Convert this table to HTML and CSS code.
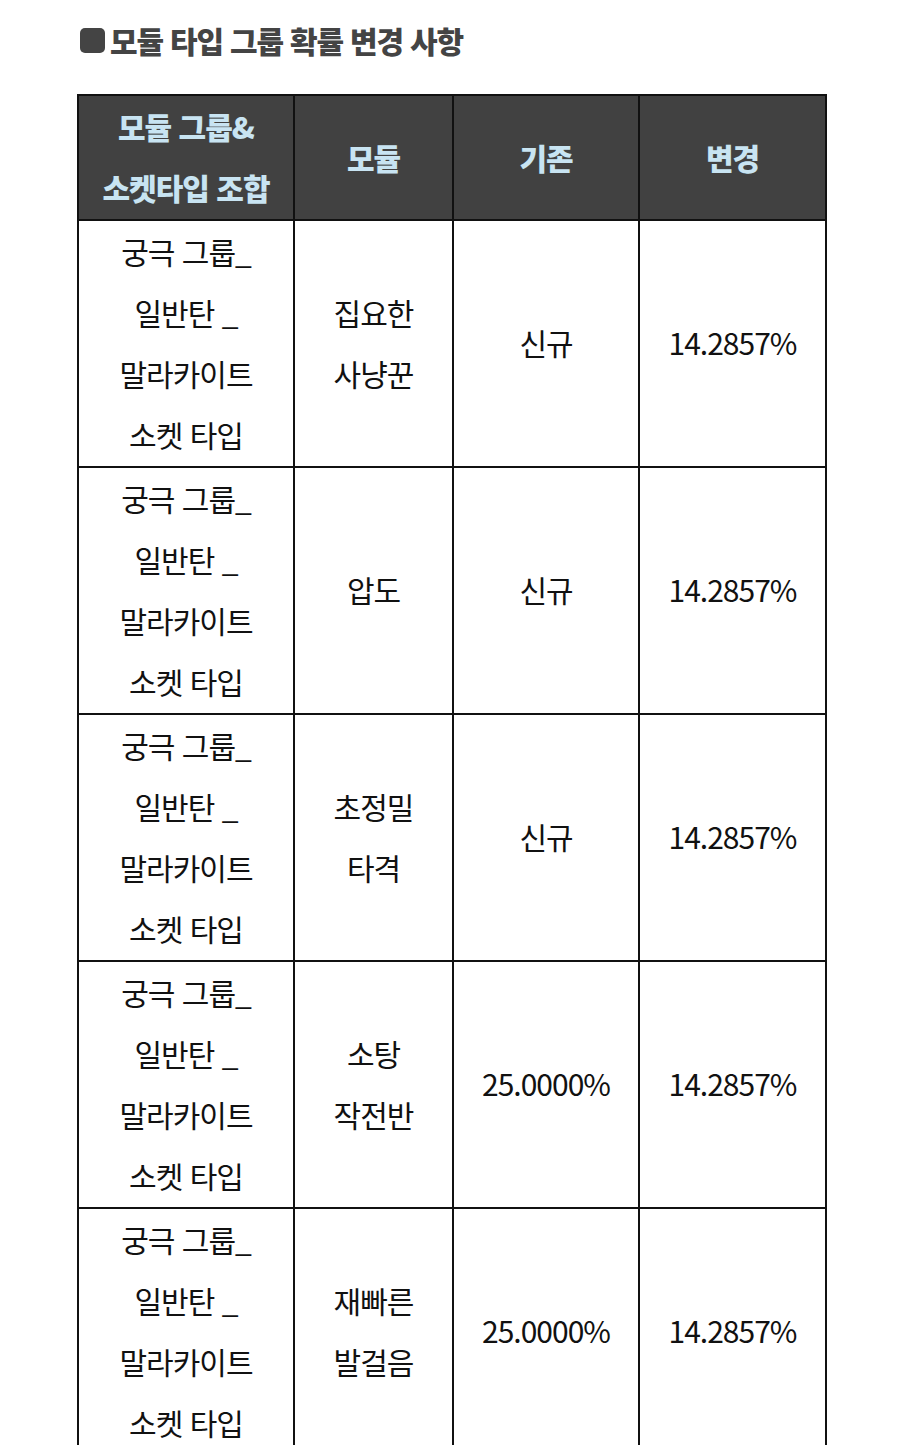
FILE: index.html
```html
<!DOCTYPE html>
<html lang="ko">
<head>
<meta charset="utf-8">
<link rel="stylesheet" href="styles.css">
</head>
<body>
<div class="page">
  <h2 class="title"><span class="bullet"></span>모듈 타입 그룹 확률 변경 사항</h2>
  <table class="prob">
    <colgroup>
      <col class="c1"><col class="c2"><col class="c3"><col class="c4">
    </colgroup>
    <thead>
      <tr><th>모듈 그룹&amp;<br>소켓타입 조합</th><th>모듈</th><th>기존</th><th>변경</th></tr>
    </thead>
    <tbody>
      <tr><td>궁극 그룹_<br>일반탄 _<br>말라카이트<br>소켓 타입</td><td>집요한<br>사냥꾼</td><td>신규</td><td>14.2857%</td></tr>
      <tr><td>궁극 그룹_<br>일반탄 _<br>말라카이트<br>소켓 타입</td><td>압도</td><td>신규</td><td>14.2857%</td></tr>
      <tr><td>궁극 그룹_<br>일반탄 _<br>말라카이트<br>소켓 타입</td><td>초정밀<br>타격</td><td>신규</td><td>14.2857%</td></tr>
      <tr><td>궁극 그룹_<br>일반탄 _<br>말라카이트<br>소켓 타입</td><td>소탕<br>작전반</td><td>25.0000%</td><td>14.2857%</td></tr>
      <tr><td>궁극 그룹_<br>일반탄 _<br>말라카이트<br>소켓 타입</td><td>재빠른<br>발걸음</td><td>25.0000%</td><td>14.2857%</td></tr>
    </tbody>
  </table>
</div>
</body>
</html>
```
FILE: styles.css
```css
html, body {
  margin: 0;
  background: #fff;
}
.page {
  padding: 18px 0 0 77px;
  font-family: "Noto Sans CJK KR", "Noto Sans", sans-serif;
}
.title {
  margin: 0 0 32px 3px;
  display: flex;
  align-items: center;
  gap: 5px;
  font-size: 30px;
  font-weight: 900;
  letter-spacing: -1.2px;
  color: #444;
  line-height: 44px;
}
.bullet {
  width: 25px;
  height: 25px;
  border-radius: 5px;
  background: #444;
  flex: none;
}
.prob {
  border-collapse: collapse;
  width: 748px;
  table-layout: fixed;
}
.c1 { width: 216px; }
.c2 { width: 159px; }
.c3 { width: 186px; }
.c4 { width: 187px; }
.prob th, .prob td {
  border: 2px solid #111;
  text-align: center;
  vertical-align: middle;
  padding: 0;
  font-size: 30px;
  letter-spacing: -1px;
  line-height: 61.25px;
}
.prob th {
  background: #414141;
  color: #c8e4f2;
  font-weight: 900;
  height: 121px;
}
.prob td {
  color: #111;
  font-weight: 400;
  height: 240px;
}
```
